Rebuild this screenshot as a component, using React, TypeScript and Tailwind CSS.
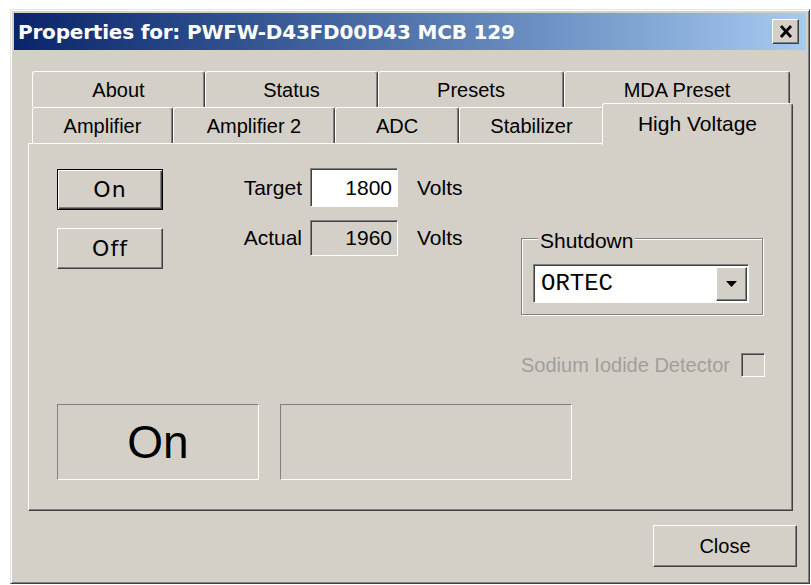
import React from "react";

// classic 3D edges
const raised =
  "border border-t-white border-l-white border-r-[#404040] border-b-[#404040] shadow-[inset_-1px_-1px_0_#808080]";
const sunken =
  "border border-t-[#808080] border-l-[#808080] border-r-white border-b-white shadow-[inset_1px_1px_0_#404040]";

const topTabs = [
  { label: "About", w: "w-[173px]" },
  { label: "Status", w: "w-[173px]" },
  { label: "Presets", w: "w-[186px]" },
  { label: "MDA Preset", w: "w-[226px]" },
];

const bottomTabs = [
  { label: "Amplifier", w: "w-[141px]" },
  { label: "Amplifier 2", w: "w-[162px]" },
  { label: "ADC", w: "w-[124px]" },
  { label: "Stabilizer", w: "w-[145px]" },
];

function Tab({ label, w }: { label: string; w: string }) {
  return (
    <div
      className={`${w} h-[36px] flex items-center justify-center rounded-t-[3px] border-t border-l border-r border-t-white border-l-white border-r-[#404040] shadow-[inset_-1px_0_0_#808080] text-[20px] text-black`}
    >
      {label}
    </div>
  );
}

export default function App() {
  return (
    <div className="min-h-screen bg-white pt-[9px] pl-[10px] font-['Liberation_Sans',Arial,sans-serif]">
      <div className="w-[800px] h-[575px] bg-[#d4d0c8] border border-t-[#e8e6e0] border-l-[#e8e6e0] border-r-[#404040] border-b-[#404040] shadow-[inset_1px_1px_0_#fff,inset_-1px_-1px_0_#808080] pt-[3px] px-[3px] flex flex-col">
        {/* title bar */}
        <div className="h-[37px] flex items-center bg-linear-to-r from-[#0a246a] to-[#a6caf0]">
          <span className="pl-[4px] text-white font-bold text-[20px] font-['DejaVu_Sans',sans-serif] tracking-[-0.2px]">
            Properties for: PWFW-D43FD00D43 MCB 129
          </span>
          <button
            className={`ml-auto mr-[7px] w-[27px] h-[25px] bg-[#d4d0c8] ${raised} flex items-center justify-center`}
          >
            <svg width="14" height="13" viewBox="0 0 14 13">
              <path d="M2 1 L12 12 M12 1 L2 12" stroke="#000" strokeWidth="2.8" />
            </svg>
          </button>
        </div>

        {/* tab rows */}
        <div className="mt-[21px] ml-[14px] w-[765px]">
          <div className="flex pl-[4px]">
            {topTabs.map((t) => (
              <Tab key={t.label} {...t} />
            ))}
          </div>
          <div className="flex items-end h-[36px] pl-[4px]">
            {bottomTabs.map((t) => (
              <Tab key={t.label} {...t} />
            ))}
            <div className="relative z-10 -ml-[2px] -mb-[2px] w-[191px] h-[42px] bg-[#d4d0c8] rounded-t-[3px] border-t border-l border-r border-t-white border-l-white border-r-[#404040] shadow-[inset_-1px_0_0_#808080] flex justify-center pt-[4px] text-[21px] text-black">
              High Voltage
            </div>
          </div>

          {/* High Voltage page */}
          <div
            className={`h-[368px] ${raised} pl-[28px] pr-[27px] pt-[25px] flex flex-col text-black`}
          >
            <div className="flex items-start">
              <div className="w-[106px] flex flex-col gap-[18px] font-['DejaVu_Sans',sans-serif] text-[22px]">
                <button className="h-[41px] border border-black shadow-[inset_1px_1px_0_#fff,inset_-1px_-1px_0_#404040,inset_-2px_-2px_0_#808080] bg-[#d4d0c8] tracking-[1px]">
                  On
                </button>
                <button className={`h-[41px] ${raised} bg-[#d4d0c8] tracking-[1px]`}>
                  Off
                </button>
              </div>

              <div className="ml-[67px] -mt-[1px] flex flex-col gap-[13px] text-[21px]">
                <div className="flex items-center">
                  <span className="w-[72px] text-right">Target</span>
                  <div
                    className={`ml-[8px] w-[88px] h-[39px] bg-white ${sunken} flex items-center justify-end pr-[5px]`}
                  >
                    1800
                  </div>
                  <span className="ml-[19px]">Volts</span>
                </div>
                <div className="flex items-center">
                  <span className="w-[72px] text-right">Actual</span>
                  <div
                    className={`ml-[8px] w-[88px] h-[36px] bg-[#d4d0c8] ${sunken} flex items-center justify-end pr-[5px]`}
                  >
                    1960
                  </div>
                  <span className="ml-[19px]">Volts</span>
                </div>
              </div>

              {/* shutdown group */}
              <div className="relative ml-auto mr-[2px] mt-[69px] w-[242px] h-[77px] border border-[#808080] shadow-[inset_1px_1px_0_#fff,1px_1px_0_#fff] pl-[11px] pt-[25px]">
                <span className="absolute -top-[14px] left-[16px] px-[2px] bg-[#d4d0c8] text-[21px]">
                  Shutdown
                </span>
                <div className={`w-[216px] h-[39px] bg-white ${sunken} flex items-center`}>
                  <span className="pl-[7px] font-['Liberation_Mono',monospace] text-[24px] leading-none">
                    ORTEC
                  </span>
                  <div
                    className={`ml-auto mr-[1px] w-[31px] h-[34px] bg-[#d4d0c8] ${raised} flex items-center justify-center`}
                  >
                    <svg width="11" height="6" viewBox="0 0 11 6">
                      <path d="M0 0 H11 L5.5 6 Z" fill="#000" />
                    </svg>
                  </div>
                </div>
              </div>
            </div>

            <div className="mt-[35px] flex items-center justify-end gap-[11px]">
              <span className="text-[20px] text-[#a19f99]">Sodium Iodide Detector</span>
              <div className={`w-[24px] h-[24px] bg-[#d4d0c8] ${sunken}`} />
            </div>

            <div className="mt-[24px] flex gap-[21px]">
              <div className="w-[202px] h-[76px] border border-t-[#808080] border-l-[#808080] border-r-white border-b-white flex items-center justify-center text-[46px]">
                On
              </div>
              <div className="w-[292px] h-[76px] border border-t-[#808080] border-l-[#808080] border-r-white border-b-white" />
            </div>
          </div>
        </div>

        <div className="mt-[14px] flex justify-end pr-[9px]">
          <button className={`w-[144px] h-[42px] bg-[#d4d0c8] ${raised} text-[20px] text-black`}>
            Close
          </button>
        </div>
      </div>
    </div>
  );
}
